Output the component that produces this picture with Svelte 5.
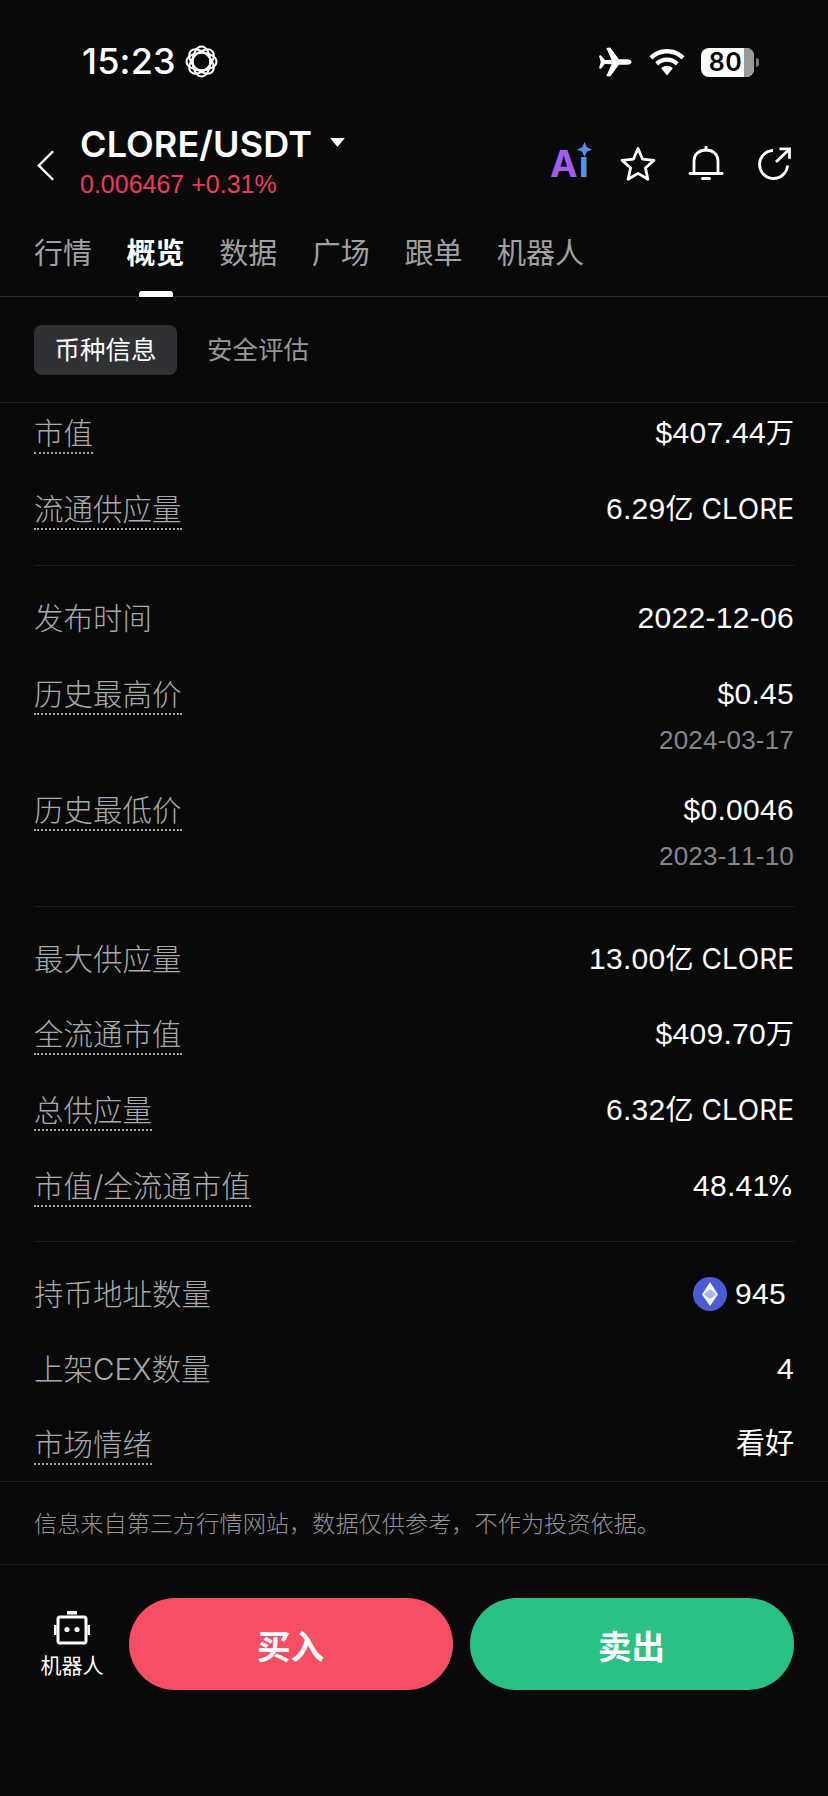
<script>
  const tabs = ['行情', '概览', '数据', '广场', '跟单', '机器人'];
  const groups = [
    { rows: [
      { l: '市值', n: '$407.44', u: '万', d: true },
      { l: '流通供应量', n: '6.29', u: '亿 CLORE', d: true }
    ]},
    { rows: [
      { l: '发布时间', n: '2022-12-06' },
      { l: '历史最高价', n: '$0.45', s: '2024-03-17', d: true },
      { l: '历史最低价', n: '$0.0046', s: '2023-11-10', d: true }
    ]},
    { rows: [
      { l: '最大供应量', n: '13.00', u: '亿 CLORE' },
      { l: '全流通市值', n: '$409.70', u: '万', d: true },
      { l: '总供应量', n: '6.32', u: '亿 CLORE', d: true },
      { l: '市值/全流通市值', n: '48.41', u: '%', d: true, tight: true }
    ]}
  ];
</script>

<div class="page">
  <div class="status">
    <div class="time-wrap">
      <span class="time">15:23</span>
      <svg class="focus" viewBox="0 0 32 32" fill="none" stroke="#fff" stroke-width="2">
        <ellipse cx="16" cy="16" rx="14.500" ry="8.500"/>
        <ellipse cx="16" cy="16" rx="14.500" ry="8.500" transform="rotate(45 16 16)"/>
        <ellipse cx="16" cy="16" rx="14.500" ry="8.500" transform="rotate(90 16 16)"/>
        <ellipse cx="16" cy="16" rx="14.500" ry="8.500" transform="rotate(135 16 16)"/>
      </svg>
    </div>
    <div class="sys">
      <svg class="plane" viewBox="0 0 34 30" fill="#fff"><path d="M0 8.500 L2.200 8 L6 13 L13 12.600 L7.500 0.500 L11.500 0 L20.500 12.200 L29 12.200 C32 12.200 33.500 13.600 33.500 15 C33.500 16.400 32 17.800 29 17.800 L20.500 17.800 L11.500 30 L7.500 29.500 L13 17.400 L6 17 L2.200 22 L0 21.500 L1.800 15 Z"/></svg>
      <svg class="wifi" viewBox="0 0 36 27" fill="#fff"><path d="M18 0C11 0 5 2.800 0.500 7.200L3.400 10.400C7.200 6.700 12.300 4.400 18 4.400S28.800 6.700 32.600 10.400L35.500 7.200C31 2.800 25 0 18 0Z"/><path d="M18 8.400C13.400 8.400 9.300 10.200 6.300 13.200L9.200 16.400C11.500 14.200 14.600 12.800 18 12.800S24.500 14.200 26.800 16.400L29.700 13.200C26.700 10.200 22.600 8.400 18 8.400Z"/><path d="M18 16.800C15.800 16.800 13.800 17.700 12.200 19.200L18 26.500L23.800 19.200C22.200 17.700 20.200 16.800 18 16.800Z"/></svg>
      <div class="battery"><span>80</span><i></i></div>
      <b class="nub"></b>
    </div>
  </div>

  <header class="head">
    <svg class="back" viewBox="0 0 20 34" fill="none" stroke="#fff" stroke-width="2.600"><path d="M18 2 L3 17 L18 32"/></svg>
    <div class="title">
      <div class="pair"><span>CLORE/USDT</span><svg class="caret" viewBox="0 0 16 12" fill="#fff"><path d="M0 1 H16 L8 11 Z"/></svg></div>
      <div class="price">0.006467 +0.31%</div>
    </div>
    <div class="actions">
      <div class="ai"><span class="a">A</span><span class="i">ı</span>
        <svg class="spark" viewBox="0 0 14 14" fill="#5b8cf5"><path d="M7 0 L9.200 4.800 L14 7 L9.200 9.200 L7 14 L4.800 9.200 L0 7 L4.800 4.800 Z"/></svg>
      </div>
      <svg class="ic" viewBox="0 0 36 36" fill="none" stroke="#fff" stroke-width="2.800" stroke-linejoin="round"><path d="M18 2.500 L22.600 13.200 L34 14.300 L25.400 22 L27.900 33.300 L18 27.400 L8.100 33.300 L10.600 22 L2 14.300 L13.400 13.200 Z"/></svg>
      <svg class="ic" viewBox="0 0 36 36" fill="none" stroke="#fff" stroke-width="2.800" stroke-linecap="round"><path d="M6 27 V15 C6 8.500 11 4 18 4 S30 8.500 30 15 V27"/><path d="M2 27.500 H34"/><path d="M18 1 V4"/><path d="M14.500 32.500 H21.500" stroke-width="3"/></svg>
      <svg class="ic" viewBox="0 0 36 36" fill="none" stroke="#fff" stroke-width="2.800"><path d="M17 4.500 A14 14 0 1 0 31.500 19.500"/><path d="M20 16 L33 3.500"/><path d="M23.500 2.800 H33.500 V12.800"/></svg>
    </div>
  </header>

  <nav class="tabs">
    {#each tabs as t, i}
      <div class="tab" class:on={i === 1}>{t}{#if i === 1}<em></em>{/if}</div>
    {/each}
  </nav>

  <div class="sub">
    <div class="chip">币种信息</div>
    <div class="chip2">安全评估</div>
  </div>

  <main class="list">
    {#each groups as g, gi}
      <section class="group" class:g0={gi === 0}>
        {#each g.rows as r}
          <div class="row" class:tall={r.s}>
            <div class="lab"><span class:dot={r.d}>{r.l}</span></div>
            <div class="val">
              <div>{r.n}{#if r.u}<span class="unit" class:tight={r.tight}>{r.u}</span>{/if}</div>
              {#if r.s}<div class="sm">{r.s}</div>{/if}
            </div>
          </div>
        {/each}
      </section>
    {/each}
    <section class="group last">
      <div class="row short">
        <div class="lab"><span>持币地址数量</span></div>
        <div class="val holder">
          <svg class="eth" viewBox="0 0 34 34"><circle cx="17" cy="17" r="17" fill="#4a5bd4"/><path d="M17 5 L25 17.500 L17 29 L9 17.500 Z" fill="#fff" opacity=".95"/><path d="M17 12 L23 17.500 L17 22 L11 17.500 Z" fill="#aab4ee"/></svg>
          <span>945</span>
        </div>
      </div>
      <div class="row short"><div class="lab"><span>上架CEX数量</span></div><div class="val">4</div></div>
      <div class="row short"><div class="lab"><span class="dot">市场情绪</span></div><div class="val"><span class="unit big">看好</span></div></div>
    </section>
  </main>

  <div class="note">信息来自第三方行情网站，数据仅供参考，不作为投资依据。</div>

  <footer class="foot">
    <div class="robot">
      <svg viewBox="0 0 36 34" fill="none"><rect x="13" y="0" width="10" height="3.500" fill="#fff"/><rect x="4" y="6" width="28" height="26" rx="2" stroke="#fff" stroke-width="3"/><rect x="0" y="14" width="2.500" height="10" fill="#fff"/><rect x="33.500" y="14" width="2.500" height="10" fill="#fff"/><circle cx="13" cy="18.500" r="2.600" fill="#fff"/><circle cx="23" cy="18.500" r="2.600" fill="#fff"/></svg>
      <span>机器人</span>
    </div>
    <button class="btn buy">买入</button>
    <button class="btn sell">卖出</button>
  </footer>
</div>

<style>
  :global(body) { margin: 0; background: #09090a; }
  .page {
    width: 828px; height: 1796px; background: #09090a; color: #fff; overflow: hidden;
    font-family: Inter, "Noto Sans CJK SC", sans-serif;
    display: flex; flex-direction: column;
  }
  .status { height: 122px; box-sizing: border-box; padding: 41px 69px 0 82px; display: flex; justify-content: space-between; align-items: flex-start; }
  .time-wrap { display: flex; align-items: center; gap: 9px; height: 40px; }
  .time { font-size: 36px; font-weight: 500; letter-spacing: 0.2px; }
  .focus { width: 33px; height: 33px; }
  .sys { display: flex; align-items: center; height: 40px; margin-top: 1px; }
  .plane { width: 33px; height: 30px; margin-right: 17px; }
  .wifi { width: 36px; height: 27px; margin-right: 16px; }
  .battery { width: 53px; height: 29px; border-radius: 8px; background: #fff; position: relative; overflow: hidden; color: #000; font-size: 25px; font-weight: 600; text-align: center; line-height: 29px; }
  .battery span { position: relative; left: -2px; z-index: 1; letter-spacing: 0.5px; }
  .battery i { position: absolute; right: 0; top: 0; bottom: 0; width: 10px; background: #999; }
  .nub { width: 3px; height: 9px; background: #777; border-radius: 0 3px 3px 0; margin-left: 2px; }

  .head { height: 85px; display: flex; align-items: flex-start; position: relative; padding-left: 36px; }
  .back { width: 19px; height: 33px; margin-top: 27px; flex: none; }
  .title { margin-left: 25px; }
  .pair { display: flex; align-items: center; font-size: 36px; font-weight: 600; height: 44px; line-height: 44px; letter-spacing: 0.1px; }
  .caret { width: 15px; height: 11px; margin-left: 18px; margin-bottom: 4px; }
  .price { color: #ee3a5c; font-family: "Liberation Sans", sans-serif; font-size: 25px; line-height: 30px; margin-top: 3px; }
  .actions { position: absolute; right: 36px; top: 24px; display: flex; align-items: center; gap: 32px; }
  .ai { position: relative; width: 39px; height: 34px; font-size: 37px; font-weight: 700; line-height: 34px; display: flex; margin-right: -1px; }
  .ai .a { color: #a45df0; }
  .ai .i { color: #5095ea; font-size: 37px; font-weight: 700; margin-left: 1px; }
  .ai .spark { position: absolute; right: -3px; top: -5px; width: 15px; height: 15px; }
  .ic { width: 36px; height: 36px; }

  .tabs { height: 90px; box-sizing: border-box; display: flex; gap: 34.600px; padding: 0 34px; border-bottom: 1px solid #2a2b2d; }
  .tab { font-size: 29px; color: #a0a1a4; line-height: 42px; margin-top: 26px; position: relative; height: 64px; white-space: nowrap; }
  .tab.on { color: #fff; font-weight: 700; }
  .tab em { position: absolute; left: 12px; bottom: 0; width: 34px; height: 6px; background: #fff; border-radius: 3px 3px 0 0; }

  .sub { height: 106px; box-sizing: border-box; padding: 28px 34px 0; display: flex; align-items: flex-start; border-bottom: 1px solid #1f2022; flex: none; }
  .chip { width: 143px; height: 50px; line-height: 50px; border-radius: 8px; background: #2f3135; text-align: center; font-size: 25.500px; color: #fff; }
  .chip2 { margin-left: 30px; font-size: 25.500px; line-height: 50px; color: #97989b; }

  .list { height: 1079px; flex: none; overflow: hidden; border-bottom: 1px solid #1f2022; box-sizing: border-box; }
  .group { margin: 0 34px; padding: 26px 0 6px; border-bottom: 1px solid #1d1e20; }
  .group.g0 { padding-top: 4px; padding-bottom: 7px; }
  .group.last { border-bottom: 0; padding-bottom: 0; }
  .row { display: flex; justify-content: space-between; align-items: flex-start; min-height: 75.600px; }
  .row.tall { min-height: 116px; }
  .row.short { min-height: 74.800px; }
  .lab { font-size: 29.500px; color: #a8a9ac; line-height: 53px; font-weight: 300; }
  .lab span { display: inline-block; line-height: 38px; }
  .lab .dot { border-bottom: 2px dotted #a5a6a8; }
  .val { font-family: "Liberation Sans", "Noto Sans CJK SC", sans-serif; font-kerning: none; font-size: 30px; letter-spacing: 0.3px; text-align: right; line-height: 52px; }
  .unit { font-family: Inter, "Noto Sans CJK SC", sans-serif; font-size: 28px; letter-spacing: 0; }
  .unit.tight { margin-left: -3px; }
  .unit.big { font-size: 29px; }
  .sm { font-size: 26px; letter-spacing: 0.2px; color: #85868a; line-height: 30px; margin-top: 5px; }
  .holder { display: flex; align-items: center; gap: 8px; padding-right: 8px; }
  .eth { width: 34px; height: 34px; }

  .note { height: 82px; line-height: 84px; padding: 0 34px; font-size: 23.200px; color: #949598; border-bottom: 1px solid #1a1b1d; font-weight: 300; flex: none; }

  .foot { flex: none; padding: 33px 34px 0 26px; display: flex; align-items: flex-start; }
  .robot { width: 92px; display: flex; flex-direction: column; align-items: center; margin-right: 10.500px; margin-top: 13px; }
  .robot svg { width: 36px; height: 34px; }
  .robot span { font-size: 21px; line-height: 30px; margin-top: 6px; white-space: nowrap; }
  .btn { width: 324px; height: 92px; border: 0; border-radius: 46px; color: #fff; font: 700 33.500px Inter, "Noto Sans CJK SC", sans-serif; padding: 0; }
  .buy { background: #f84e65; }
  .sell { background: #28c285; margin-left: 17px; }
</style>
